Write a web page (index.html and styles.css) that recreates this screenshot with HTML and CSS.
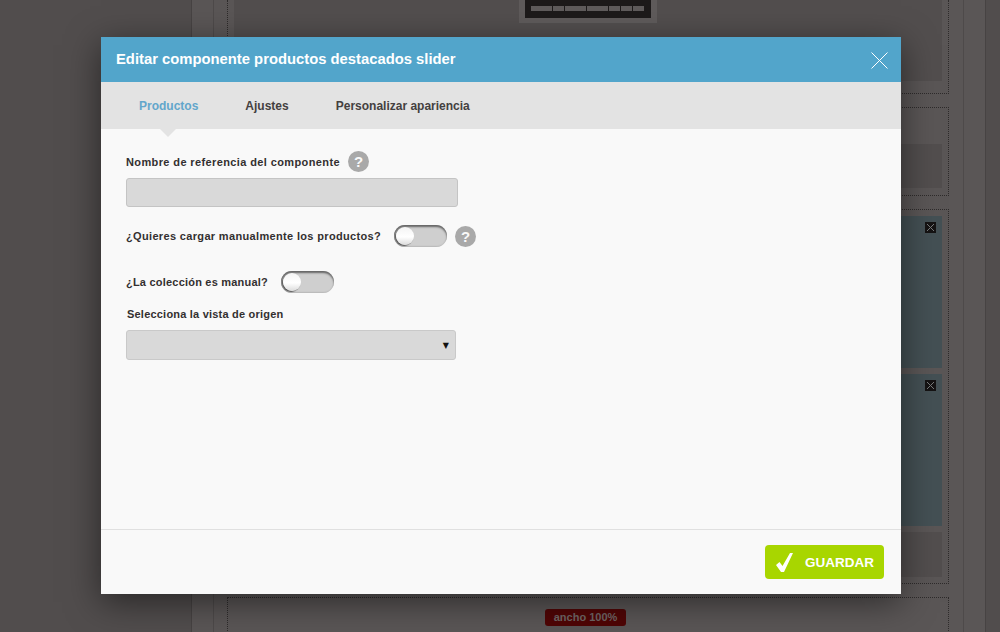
FILE: index.html
```html
<!DOCTYPE html>
<html lang="es">
<head>
    <meta charset="UTF-8">
    <title>Editar componente</title>
    <link rel="stylesheet" href="styles.css">
</head>
<body>

    <!-- Pagina de fondo -->
    <div class="page">
        <div class="page-column">
            <div class="panel panel-top">
                <div class="panel-inner panel-inner-top">
                    <div class="thumb">
                        <div class="thumb-bars">
                            <span class="bar-wide"></span><span></span><span class="bar-wide"></span><span class="bar-wide"></span><span></span><span></span><span></span>
                        </div>
                    </div>
                </div>
            </div>
            <div class="panel panel-middle">
                <div class="panel-inner panel-inner-middle"></div>
            </div>
            <div class="panel panel-slider">
                <div class="panel-inner panel-blue">
                    <span class="mini-close"><svg viewBox="0 0 11 11"><path d="M2 2l7 7M9 2l-7 7"/></svg></span>
                </div>
                <div class="panel-inner panel-blue">
                    <span class="mini-close"><svg viewBox="0 0 11 11"><path d="M2 2l7 7M9 2l-7 7"/></svg></span>
                </div>
                <div class="panel-inner panel-inner-low"></div>
            </div>
            <div class="panel panel-bottom">
                <span class="width-badge">ancho 100%</span>
            </div>
        </div>
    </div>

    <!-- Modal -->
    <div class="modal">
        <div class="modal-header">
            <h1 class="modal-title">Editar componente productos destacados slider</h1>
            <svg class="modal-close" viewBox="0 0 17 17"><path d="M0.5 0.5l16 16M16.5 0.5l-16 16"/></svg>
        </div>

        <div class="modal-tabs">
            <a class="tab tab-active">Productos</a>
            <a class="tab">Ajustes</a>
            <a class="tab">Personalizar apariencia</a>
        </div>

        <div class="modal-body">
            <div class="label-row label-row-first">
                <label class="field-label">Nombre de referencia del componente</label>
                <span class="help">?</span>
            </div>
            <input class="text-input" type="text">

            <div class="label-row label-row-switch">
                <label class="field-label label-loose">¿Quieres cargar manualmente los productos?</label>
                <span class="switch"><span class="switch-knob"></span></span>
                <span class="help">?</span>
            </div>

            <div class="label-row label-row-switch2">
                <label class="field-label label-tight">¿La colección es manual?</label>
                <span class="switch"><span class="switch-knob"></span></span>
            </div>

            <div class="select-label">
                <label class="field-label label-tight">Selecciona la vista de origen</label>
            </div>
            <div class="select-box"><span class="select-arrow">▼</span></div>
        </div>

        <div class="modal-footer">
            <button class="save-button">
                <svg class="save-check" viewBox="0 0 17 19"><path d="M0 12l3.5-3 3 4L14 0h3L8 19H5z"/></svg>
                GUARDAR
            </button>
        </div>
    </div>

</body>
</html>
```

FILE: styles.css
```css
/* Fondo */
body {
    margin: 0;
    height: 632px;
    overflow: hidden;
    background-color: #514d4d;
    font-family: 'Liberation Sans', Arial, sans-serif;
    position: relative;
}

.page {
    margin-left: 191px;
    width: 795px;
    height: 632px;
    box-sizing: border-box;
    padding: 0 21px;
    background-color: #5a5656;
    border-left: 1px solid #474343;
    border-right: 1px solid #474343;
    overflow: hidden;
}

.page-column {
    height: 632px;
    border-left: 1px solid #4e4a4a;
    border-right: 1px solid #4e4a4a;
    padding: 0 14px 0 13px;
}

.panel {
    border: 1px dotted #2e2b2b;
    box-sizing: border-box;
    padding: 0 6px;
    margin-bottom: 13px;
}

.panel-inner {
    background-color: #524e4e;
}

.panel-top {
    height: 94px;
    border-top: none;
}

.panel-inner-top {
    height: 81px;
    display: flex;
    justify-content: center;
}

.thumb {
    width: 138px;
    height: 23px;
    box-sizing: border-box;
    padding: 0 6px 5px;
    background-color: #5f5b5b;
}

.thumb-bars {
    height: 18px;
    box-sizing: border-box;
    padding: 6px 6px 0;
    background-color: #1d1a1a;
    display: flex;
    gap: 1px;
}

.thumb-bars span {
    width: 11px;
    height: 5px;
    background-color: #5f5b5b;
}

.thumb-bars .bar-wide {
    width: 21px;
}

.panel-middle {
    height: 89px;
    padding-top: 36px;
}

.panel-inner-middle {
    height: 44px;
}

.panel-slider {
    height: 375px;
    padding-top: 6px;
}

.panel-blue {
    height: 152px;
    margin-bottom: 6px;
    background-color: #445054;
    display: flex;
    justify-content: flex-end;
    padding: 6px 6px 0 0;
    box-sizing: border-box;
}

.panel-inner-low {
    height: 45px;
}

.mini-close {
    width: 11px;
    height: 11px;
    background-color: #151313;
}

.mini-close svg {
    display: block;
    width: 11px;
    height: 11px;
    fill: none;
    stroke: #77797a;
    stroke-width: 1;
}

.panel-bottom {
    height: 60px;
    border-bottom: none;
    display: flex;
    justify-content: center;
    align-items: flex-start;
    padding-top: 11px;
}

.width-badge {
    height: 17px;
    box-sizing: border-box;
    padding: 0 9px;
    border-radius: 3px;
    background-color: #500505;
    color: #6f6565;
    font-size: 11px;
    font-weight: bold;
    line-height: 17px;
    margin-right: 5px;
}

/* Modal */
.modal {
    position: absolute;
    top: 37px;
    left: 101px;
    width: 800px;
    height: 557px;
    background-color: #f9f9f9;
    box-shadow: 0 8px 32px rgba(0, 0, 0, 0.5);
    display: flex;
    flex-direction: column;
}

.modal-header {
    height: 45px;
    flex-shrink: 0;
    background-color: #52a5cb;
    display: flex;
    align-items: center;
    justify-content: space-between;
    padding: 0 13px 0 15px;
}

.modal-title {
    margin: 0 0 2px;
    font-size: 14.8px;
    font-weight: bold;
    color: #ffffff;
}

.modal-close {
    width: 17px;
    height: 17px;
    margin-top: 1px;
    fill: none;
    stroke: #ffffff;
    stroke-width: 1;
}

.modal-tabs {
    height: 47px;
    flex-shrink: 0;
    background-color: #e3e3e3;
    display: flex;
    align-items: center;
    padding-left: 38px;
    gap: 47px;
}

.tab {
    font-size: 12px;
    font-weight: bold;
    color: #444040;
}

.tab-active {
    color: #62a6cb;
    position: relative;
}

.tab-active::after {
    content: '';
    position: absolute;
    left: 21px;
    top: 30px;
    border-left: 8px solid transparent;
    border-right: 8px solid transparent;
    border-top: 8px solid #e3e3e3;
}

.modal-body {
    flex: 1;
    padding: 0 25px;
}

.label-row {
    display: flex;
    align-items: center;
}

.label-row-first {
    margin-top: 22px;
    height: 21px;
    gap: 8px;
}

.label-row-switch {
    margin-top: 18px;
    height: 22px;
    gap: 13px;
}

.label-row-switch2 {
    margin-top: 24px;
    height: 22px;
    gap: 13px;
}

.field-label {
    font-size: 11px;
    font-weight: bold;
    letter-spacing: 0.385px;
    color: #333030;
}

.label-loose {
    letter-spacing: 0.34px;
}

.label-tight {
    letter-spacing: 0.21px;
}

.help {
    width: 21px;
    height: 21px;
    border-radius: 50%;
    background-color: #a9a9a9;
    color: #f9f9f9;
    font-size: 15px;
    font-weight: bold;
    line-height: 21px;
    text-align: center;
}

.label-row-switch .help {
    margin-left: -5px;
}

.text-input {
    display: block;
    width: 332px;
    height: 29px;
    box-sizing: border-box;
    margin-top: 6px;
    background-color: #d9d9d9;
    border: 1px solid #c4c4c4;
    border-radius: 3px;
    padding: 0;
}

.switch {
    width: 53px;
    height: 22px;
    box-sizing: border-box;
    border-radius: 11px;
    background-color: #cfcfcf;
    box-shadow: inset 0 2px 2px #666666, inset 1px 0 2px #8a8a8a;
    display: flex;
    align-items: center;
    padding-left: 2px;
}

.switch-knob {
    width: 18px;
    height: 18px;
    border-radius: 50%;
    background: linear-gradient(#f4f4f4, #ffffff 55%, #dcdcdc);
    box-shadow: -1px 1px 1px #555555;
}

.select-label {
    margin-top: 13px;
    padding-left: 1px;
    height: 14px;
    line-height: 14px;
}

.select-box {
    width: 330px;
    height: 30px;
    box-sizing: border-box;
    margin-top: 10px;
    background-color: #d9d9d9;
    border: 1px solid #c9c9c9;
    border-radius: 3px;
    display: flex;
    align-items: center;
    justify-content: flex-end;
    padding-right: 6px;
}

.select-arrow {
    font-family: 'DejaVu Sans', sans-serif;
    font-size: 8px;
    color: #111111;
}

.modal-footer {
    height: 65px;
    flex-shrink: 0;
    border-top: 1px solid #e0e0e0;
    display: flex;
    justify-content: flex-end;
    padding: 15px 17px 0 0;
    box-sizing: border-box;
}

.save-button {
    width: 119px;
    height: 34px;
    border: none;
    border-radius: 4px;
    background-color: #a8d600;
    color: #ffffff;
    font-family: inherit;
    font-size: 13.5px;
    font-weight: bold;
    display: flex;
    align-items: center;
    padding: 0 0 0 11px;
    gap: 12px;
}

.save-check {
    width: 17px;
    height: 19px;
    fill: #ffffff;
}
```
